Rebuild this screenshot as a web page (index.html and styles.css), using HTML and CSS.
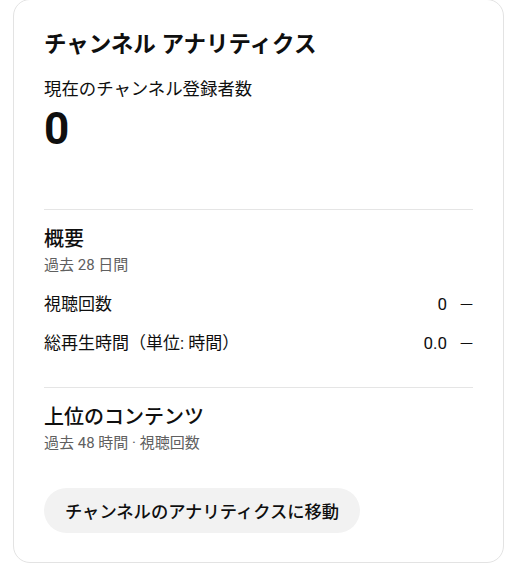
FILE: index.html
```html
<!DOCTYPE html>
<html>
<head>
    <meta charset="UTF-8">
    <link rel="stylesheet" href="styles.css">
</head>
<body>
    <div class="card">
        <div class="card-title">チャンネル アナリティクス</div>

        <div class="subs-label">現在のチャンネル登録者数</div>
        <div class="subs-count">0</div>

        <div class="divider divider-top"></div>

        <div class="section-title">概要</div>
        <div class="section-sub">過去 28 日間</div>

        <div class="metric">
            <div class="metric-name">視聴回数</div>
            <div class="metric-value">0</div>
            <div class="metric-trend">—</div>
        </div>
        <div class="metric">
            <div class="metric-name">総再生時間（単位: 時間）</div>
            <div class="metric-value">0.0</div>
            <div class="metric-trend">—</div>
        </div>

        <div class="divider divider-mid"></div>

        <div class="section-title">上位のコンテンツ</div>
        <div class="section-sub">過去 48 時間 · 視聴回数</div>

        <button class="btn-pill">チャンネルのアナリティクスに移動</button>
    </div>
</body>
</html>
```

FILE: styles.css
```css
body {
    margin: 0;
    background: #ffffff;
    color: #0f0f0f;
    font-family: Roboto, "Noto Sans CJK JP", sans-serif;
}

.card {
    box-sizing: border-box;
    width: 491px;
    margin: -1px 0 0 13px;
    padding: 30px 30px 29px;
    border: 1px solid #e3e3e3;
    border-radius: 17px;
    display: flex;
    flex-direction: column;
    align-items: flex-start;
}

.card-title {
    font-size: 22.5px;
    line-height: 28px;
    font-weight: 700;
}

.subs-label {
    margin-top: 19px;
    font-size: 17.4px;
    line-height: 24px;
}

.subs-count {
    margin-top: 2px;
    font-size: 44px;
    line-height: 52px;
    font-weight: 700;
}

.divider {
    align-self: stretch;
    height: 1px;
    background: #e5e5e5;
}

.divider-top {
    margin-top: 54px;
}

.divider-mid {
    margin-top: 32px;
}

.section-title {
    margin-top: 16px;
    font-size: 20px;
    line-height: 26px;
    font-weight: 500;
}

.section-sub {
    margin-top: 3px;
    font-size: 15px;
    line-height: 20px;
    color: #606060;
}

.metric {
    align-self: stretch;
    display: flex;
    align-items: center;
    margin-top: 17px;
    font-size: 17px;
    line-height: 24px;
}

.metric + .metric {
    margin-top: 15px;
}

.metric-name {
    flex: 1;
}

.metric-trend {
    margin-left: 13px;
    font-family: "DejaVu Sans", sans-serif;
    font-size: 13px;
    line-height: 24px;
}

.btn-pill {
    margin-top: 35px;
    height: 45px;
    padding: 0 21px;
    border: none;
    border-radius: 23px;
    background: #f2f2f2;
    color: #0f0f0f;
    font-family: Roboto, "Noto Sans CJK JP", sans-serif;
    font-size: 17.3px;
    font-weight: 500;
    cursor: pointer;
}
```
